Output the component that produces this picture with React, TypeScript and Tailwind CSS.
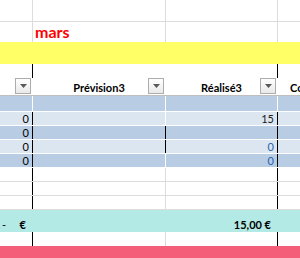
import React from "react";

function Dropdown() {
  return (
    <div className="w-[16px] h-[16px] mr-[1px] shrink-0 border border-[#acacac] bg-linear-to-b from-white to-[#e9e9e9] flex items-center justify-center">
      <svg width="7" height="4" viewBox="0 0 7 4">
        <path d="M0 0H7L3.5 4Z" fill="#595959" />
      </svg>
    </div>
  );
}

export default function App() {
  const font = { fontFamily: "Lato, 'Liberation Sans', sans-serif" };
  return (
    <div className="w-[300px] h-[258px] overflow-hidden bg-white text-black text-[11px]" style={font}>
      {/* top empty row */}
      <div className="grid grid-cols-[33px_133px_112px_1fr] h-[22px] border-b border-[#dcdcdc]">
        <div className="border-r border-[#dcdcdc]" />
        <div className="border-r border-[#dcdcdc]" />
        <div className="border-r border-[#dcdcdc]" />
        <div />
      </div>
      {/* mars row */}
      <div className="grid grid-cols-[33px_133px_112px_1fr] h-[20px]">
        <div className="border-r border-[#dcdcdc]" />
        <div className="border-r border-[#dcdcdc] pl-[2px] text-[16px] leading-[20px] font-bold text-[#ff0000]">mars</div>
        <div className="border-r border-[#dcdcdc]" />
        <div />
      </div>
      {/* yellow band */}
      <div className="h-[22px] bg-[#ffff66]" />
      {/* header top */}
      <div className="grid grid-cols-[33px_133px_112px_1fr] h-[14px]">
        <div className="border-r border-black" />
        <div className="border-r border-transparent" />
        <div className="border-r border-black" />
        <div />
      </div>
      {/* header */}
      <div className="grid grid-cols-[33px_133px_112px_1fr] h-[18px] border-b border-[#bfbfbf] font-bold">
        <div className="flex justify-end border-r border-transparent">
          <Dropdown />
        </div>
        <div className="flex border-r border-transparent">
          <div className="w-[17px] shrink-0" />
          <div className="flex-1 text-center leading-[17px] pt-[1px]">Prévision3</div>
          <Dropdown />
        </div>
        <div className="flex border-r border-transparent">
          <div className="w-[17px] shrink-0" />
          <div className="flex-1 text-center leading-[17px] pt-[1px]">Réalisé3</div>
          <Dropdown />
        </div>
        <div className="pl-[12px] leading-[17px] pt-[1px] whitespace-nowrap overflow-hidden">Commentaire</div>
      </div>
      {/* data rows */}
      <div className="grid grid-cols-[33px_133px_112px_1fr] h-[16px] bg-[#b8cce4] border-b border-white">
        <div className="border-r border-white" />
        <div className="border-r border-white" />
        <div className="border-r border-white" />
        <div />
      </div>
      <div className="grid grid-cols-[33px_133px_112px_1fr] h-[14px] bg-[#dce6f1] border-b border-white leading-[11px]">
        <div className="border-r border-black flex items-end justify-end pr-[3px] pb-[1px]">0</div>
        <div className="border-r border-white" />
        <div className="border-r border-black flex items-end justify-end pr-[3px] pb-[1px] text-[#1a1a1a]">15</div>
        <div />
      </div>
      <div className="grid grid-cols-[33px_133px_112px_1fr] h-[14px] bg-[#b8cce4] border-b border-white leading-[11px]">
        <div className="border-r border-black flex items-end justify-end pr-[3px] pb-[1px]">0</div>
        <div className="border-r border-black" />
        <div className="border-r border-black" />
        <div />
      </div>
      <div className="grid grid-cols-[33px_133px_112px_1fr] h-[14px] bg-[#dce6f1] border-b border-white leading-[11px]">
        <div className="border-r border-black flex items-end justify-end pr-[3px] pb-[1px]">0</div>
        <div className="border-r border-black" />
        <div className="border-r border-black flex items-end justify-end pr-[3px] pb-[1px] text-[#2563b0]">0</div>
        <div />
      </div>
      <div className="grid grid-cols-[33px_133px_112px_1fr] h-[14px] bg-[#b8cce4] border-b border-white leading-[11px]">
        <div className="border-r border-black flex items-end justify-end pr-[3px] pb-[1px]">0</div>
        <div className="border-r border-white" />
        <div className="border-r border-black flex items-end justify-end pr-[3px] pb-[1px] text-[#2563b0]">0</div>
        <div />
      </div>
      {/* white rows */}
      {[0, 1, 2].map((i) => (
        <div key={i} className="grid grid-cols-[33px_133px_112px_1fr] h-[14px] border-b border-[#dcdcdc]">
          <div className="border-r border-black" />
          <div className="border-r border-[#dcdcdc]" />
          <div className="border-r border-black" />
          <div />
        </div>
      ))}
      {/* total row */}
      <div className="grid grid-cols-[33px_133px_112px_1fr] h-[22px] bg-[#b3eae5] font-bold leading-[11px]">
        <div className="border-r border-transparent flex items-end justify-between pl-[2px] pr-[6px] pb-[2px]">
          <span className="font-normal">-</span>
          <span>€</span>
        </div>
        <div className="border-r border-transparent" />
        <div className="border-r border-transparent flex items-end justify-end pr-[6px] pb-[2px]">15,00 €</div>
        <div />
      </div>
      {/* white row */}
      <div className="grid grid-cols-[33px_133px_112px_1fr] h-[14px]">
        <div className="border-r border-black" />
        <div className="border-r border-[#dcdcdc]" />
        <div className="border-r border-black" />
        <div />
      </div>
      {/* red bar */}
      <div className="h-[12px] bg-[#f45e78]" />
    </div>
  );
}
